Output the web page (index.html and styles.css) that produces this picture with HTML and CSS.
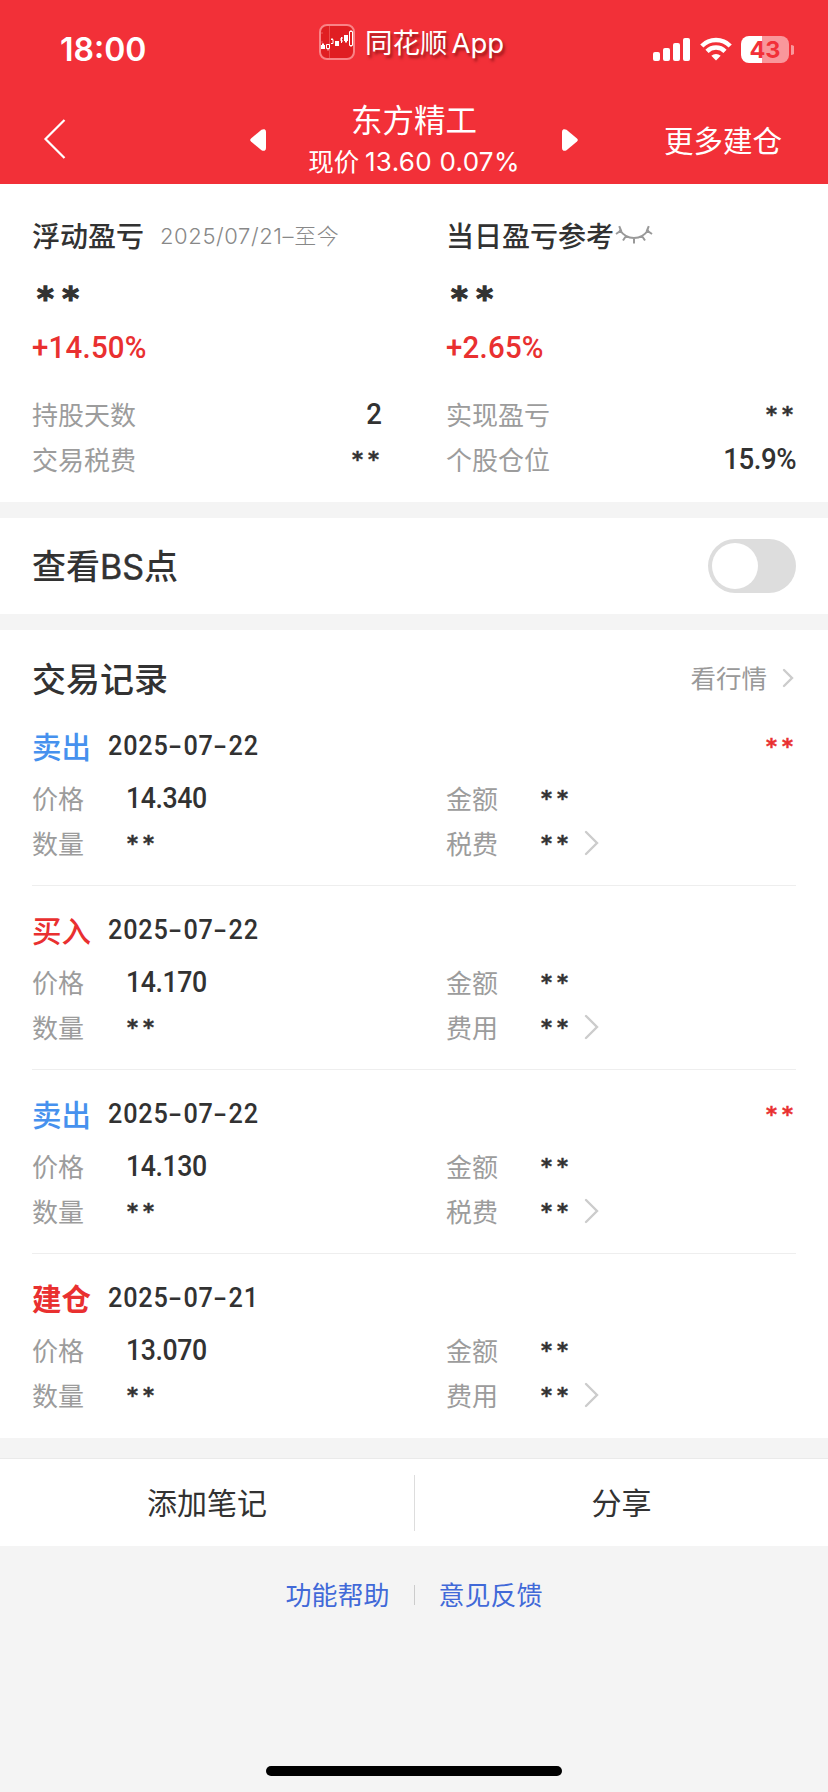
FILE: index.html
```html
<!DOCTYPE html>
<html lang="zh-CN">
<head>
<meta charset="utf-8">
<title>东方精工</title>
<link rel="stylesheet" href="styles.css">
</head>
<body>
<header class="header">
  <div class="status">
    <span class="clock">18:00</span>
    <div class="app">
      <svg class="app-icon" width="36" height="36" viewBox="0 0 36 36">
        <rect x="1" y="1" width="34" height="34" rx="7" fill="#e01e22" stroke="#f98386" stroke-width="2"/>
        <path d="M10.5 2v32" stroke="#ec4a4c"/>
        <path d="M2 9h2M2 18h2" stroke="#ef5a5c"/>
        <path d="M2 21h4v4H2zM3 19.500h2v2H3zM16 17h4v5h-4zM25 11h4v6h-4zM26 17h2v1.500h-2z" fill="#fff"/>
        <path d="M7.500 20.500h3v4h-3zM9 24.500v2M12 15.500h2v4h-2M13 14v1.500M24 14h-2v3h2M22.500 13v6M30.500 7.500h3v14h-3zM32 6v1.500M32 21v2" fill="none" stroke="#fff"/>
      </svg>
      <span class="app-name">同花顺<span class="app-latin">App</span></span>
    </div>
    <div class="indicators">
      <svg width="37" height="24" viewBox="0 0 37 24" fill="#fff">
        <rect x="0" y="14" width="7" height="9" rx="2"/><rect x="10" y="10" width="7" height="13" rx="2"/><rect x="20" y="5" width="7" height="18" rx="2"/><rect x="30" y="0" width="7" height="23" rx="2"/>
      </svg>
      <svg class="wifi" width="32" height="24" viewBox="0 0 32 24">
        <path d="M1.800 9a20 20 0 0 1 28.400 0M7 14.300a12.800 12.800 0 0 1 18 0" fill="none" stroke="#fff" stroke-width="4.500"/>
        <path d="M16 23.500l-4.700-4.800a7 7 0 0 1 9.400 0z" fill="#fff"/>
      </svg>
      <span class="battery">43</span>
      <svg class="nub" width="3" height="10" viewBox="0 0 3 10"><path d="M0 0a5 5 0 0 1 0 10z" fill="#f9979b"/></svg>
    </div>
  </div>
  <nav class="nav">
    <svg class="back" width="24" height="42" viewBox="0 0 24 42"><path d="M21.500 2L2.500 21l19 19" fill="none" stroke="#fff" stroke-width="2.200"/></svg>
    <svg class="prev" width="16" height="22" viewBox="0 0 16 22"><path d="M1 9.500L11.500.8Q13 0 14.500.3 16 .8 16 3v16q0 2.200-1.500 2.700-1.500.3-3-.5L1 12.500q-1.600-1.500 0-3z" fill="#fff"/></svg>
    <div class="stock">
      <div class="stock-name">东方精工</div>
      <div class="stock-price">现价 <span class="quote">13.60 0.07%</span></div>
    </div>
    <svg class="next" width="16" height="22" viewBox="0 0 16 22"><path d="M15 9.500L4.500.8Q3 0 1.500.3 0 .8 0 3v16q0 2.200 1.500 2.700 1.500.3 3-.5L15 12.500q1.600-1.500 0-3z" fill="#fff"/></svg>
    <span class="more">更多建仓</span>
  </nav>
</header>

<section class="summary">
  <div class="col">
    <div class="col-head">浮动盈亏<span class="since">2025/07/21–至今</span></div>
    <div class="stars-lg">**</div>
    <div class="pct">+14.50%</div>
    <div class="pair first"><span class="label">持股天数</span><span class="num">2</span></div>
    <div class="pair"><span class="label">交易税费</span><span class="stars end">**</span></div>
  </div>
  <div class="col">
    <div class="col-head">当日盈亏参考<svg class="eye" width="38" height="20" viewBox="0 0 38 20" fill="none" stroke="#999" stroke-width="2"><path d="M4.500 4.500Q10 13 19 13t14.500-8.500M1 9l5-3.500L4.200 1.200M37 9l-5-3.500 1.800-4.300M11 11l-3 4.500M19 13v5.500M27 11l3 4.500"/></svg></div>
    <div class="stars-lg">**</div>
    <div class="pct">+2.65%</div>
    <div class="pair first"><span class="label">实现盈亏</span><span class="stars end">**</span></div>
    <div class="pair"><span class="label">个股仓位</span><span class="num">15.9%</span></div>
  </div>
</section>

<section class="bs">
  <span class="title">查看<span class="latin">BS</span>点</span>
  <span class="toggle"><span class="knob"></span></span>
</section>

<section class="records">
  <div class="records-head">
    <span class="title">交易记录</span>
    <span class="market"><span class="market-text">看行情</span><svg width="12" height="20" viewBox="0 0 12 20"><path d="M2 2l8 8-8 8" fill="none" stroke="#ccc" stroke-width="2.400" stroke-linecap="round"/></svg></span>
  </div>
  <article class="record">
    <div class="record-head"><span class="side sell">卖出</span><span class="date">2025<i>-</i>07<i>-</i>22</span><span class="stars end gain">**</span></div>
    <div class="line"><span class="label">价格</span><span class="num">14.340</span><span class="label">金额</span><span class="stars">**</span></div>
    <div class="line"><span class="label">数量</span><span class="stars">**</span><span class="label">税费</span><span class="stars">**</span><svg class="go" width="16" height="26" viewBox="0 0 16 26"><path d="M2 2l11 11L2 24"/></svg></div>
  </article>
  <article class="record">
    <div class="record-head"><span class="side">买入</span><span class="date">2025<i>-</i>07<i>-</i>22</span></div>
    <div class="line"><span class="label">价格</span><span class="num">14.170</span><span class="label">金额</span><span class="stars">**</span></div>
    <div class="line"><span class="label">数量</span><span class="stars">**</span><span class="label">费用</span><span class="stars">**</span><svg class="go" width="16" height="26" viewBox="0 0 16 26"><path d="M2 2l11 11L2 24"/></svg></div>
  </article>
  <article class="record">
    <div class="record-head"><span class="side sell">卖出</span><span class="date">2025<i>-</i>07<i>-</i>22</span><span class="stars end gain">**</span></div>
    <div class="line"><span class="label">价格</span><span class="num">14.130</span><span class="label">金额</span><span class="stars">**</span></div>
    <div class="line"><span class="label">数量</span><span class="stars">**</span><span class="label">税费</span><span class="stars">**</span><svg class="go" width="16" height="26" viewBox="0 0 16 26"><path d="M2 2l11 11L2 24"/></svg></div>
  </article>
  <article class="record">
    <div class="record-head"><span class="side open">建仓</span><span class="date">2025<i>-</i>07<i>-</i>21</span></div>
    <div class="line"><span class="label">价格</span><span class="num">13.070</span><span class="label">金额</span><span class="stars">**</span></div>
    <div class="line"><span class="label">数量</span><span class="stars">**</span><span class="label">费用</span><span class="stars">**</span><svg class="go" width="16" height="26" viewBox="0 0 16 26"><path d="M2 2l11 11L2 24"/></svg></div>
  </article>
</section>

<div class="actions"><span>添加笔记</span><span class="split"></span><span>分享</span></div>
<footer class="links"><span>功能帮助</span><span class="bar"></span><span>意见反馈</span></footer>
<div class="home"></div>
</body>
</html>
```
FILE: styles.css
```css
* { box-sizing: border-box; }
body {
  margin: 0;
  width: 828px;
  height: 1792px;
  overflow: hidden;
  display: flex;
  flex-direction: column;
  background: #f4f4f4;
  color: #323232;
  font-family: "Noto Sans CJK SC", sans-serif;
  white-space: nowrap;
}
svg { display: block; flex: none; }

.header { height: 184px; background: #f23038; color: #fff; flex: none; }
.status { height: 98px; display: flex; align-items: flex-start; }
.clock { width: 259px; margin-left: 60px; padding-top: 30px; font: 600 32px/40px Inter, sans-serif; }
.app { display: flex; align-items: center; width: 334px; margin-top: 24px; height: 36px; }
.app-name { margin-left: 10px; font-size: 27.500px; line-height: 36px; text-shadow: 2px 3px 3px rgba(80, 0, 0, .55); }
.app-latin { font-family: Inter, sans-serif; margin-left: 4px; }
.indicators { display: flex; padding-top: 36px; }
.indicators svg:first-child { margin-top: 2px; }
.wifi { margin: 1px 9px 0 10px; }
.battery {
  width: 48px; height: 27px; border-radius: 8px;
  background: linear-gradient(90deg, #fff 21px, #f9979b 21px);
  color: #f23038; text-align: center; font: 700 23.500px/27px Inter, sans-serif;
}
.nub { margin: 9px 0 0 2px; }
.nav { display: flex; height: 86px; }
.back { margin: 20px 0 0 43px; }
.prev { margin: 31px 0 0 183px; }
.stock { width: 296px; text-align: center; }
.stock-name { font-size: 31.500px; line-height: 40px; }
.stock-price { font-size: 25.500px; line-height: 44px; }
.quote { font-family: Inter, sans-serif; font-size: 26px; letter-spacing: .3px; }
.next { margin-top: 31px; }
.more { margin: 20px 0 0 86px; font-size: 29.500px; line-height: 42px; }

.summary { height: 318px; background: #fff; display: flex; flex: none; }
.col { width: 414px; padding: 31px 32px 0; }
.col-head { display: flex; align-items: center; height: 40px; font-size: 28px; line-height: 40px; font-weight: 500; }
.since { margin-left: 16px; padding-top: 2px; font: 300 22px/40px Inter, "Noto Sans CJK SC", sans-serif; letter-spacing: .6px; color: #888; }
.eye { margin: 0 0 0 1px; }
.stars, .stars-lg { font-family: "DejaVu Sans", sans-serif; font-weight: 700; -webkit-text-stroke: .5px currentColor; }
.stars { font-size: 21px; line-height: 30px; letter-spacing: 5px; padding-top: 2px; padding-left: 1px; }
.stars.end { margin-left: auto; margin-right: -2px; }
.stars-lg { font-size: 32px; line-height: 48px; letter-spacing: 8.500px; margin-top: 19px; padding-left: 5px; height: 43px; -webkit-text-stroke-width: 1.300px; }
.pct { height: 60px; font: 500 32px/60px Roboto, sans-serif; color: #e93030; letter-spacing: .25px; transform: scaleX(.92); transform-origin: left; }
.pair { display: flex; align-items: center; justify-content: space-between; height: 45px; }
.pair.first { margin-top: 14px; }
.label { font-size: 26px; line-height: 38px; color: #9c9c9c; }
.num { font: 500 30px/38px Roboto, sans-serif; letter-spacing: -.5px; transform: scaleX(.89); transform-origin: left; }
.pair .num { transform: scaleX(.92); transform-origin: right; }

.title { font-size: 34px; line-height: 48px; font-weight: 500; padding-bottom: 1px; }
.latin { font-family: Inter, sans-serif; font-weight: 400; -webkit-text-stroke: .5px currentColor; }
.bs { height: 96px; margin-top: 16px; padding: 0 32px; background: #fff; display: flex; align-items: center; justify-content: space-between; flex: none; }
.toggle { width: 88px; height: 54px; border-radius: 27px; padding: 4px; background: #ddd; }
.knob { display: block; width: 46px; height: 46px; border-radius: 50%; background: #fff; }

.records { height: 808px; margin-top: 16px; padding: 0 32px; background: #fff; flex: none; }
.records-head { height: 72px; padding-top: 24px; display: flex; justify-content: space-between; align-items: center; }
.market { display: flex; align-items: center; gap: 15px; padding-right: 2px; font-size: 25.500px; color: #999; }
.market-text { padding-bottom: 4px; }
.record { height: 184px; padding-top: 15px; border-bottom: 1px solid #eee; }
.record:last-child { border: 0; }
.record-head { display: flex; align-items: center; height: 58px; }
.side { width: 76px; font-size: 29.500px; line-height: 44px; padding-bottom: 2px; font-weight: 500; color: #e93030; }
.sell { color: #4691ee; }
.open { font-weight: 700; }
.date { font: 500 28px/40px Roboto, sans-serif; letter-spacing: .9px; transform: scaleX(.9); transform-origin: left; }
.date i { font-style: normal; display: inline-block; width: 16.500px; text-align: center; transform: scaleX(1.600); }
.gain { color: #e93030; }
.line { display: grid; grid-template-columns: 94px 320px 94px 44px 16px; align-items: center; height: 45.500px; }
.go path { fill: none; stroke: #ccc; stroke-width: 2.400; stroke-linecap: round; }

.actions { height: 88px; margin-top: 20px; border-top: 1px solid #eaeaea; background: #fff; display: grid; grid-template-columns: 414px 1px 413px; align-items: center; text-align: center; font-size: 30px; flex: none; }
.actions span:not(.split) { padding-bottom: 4px; }
.split { height: 56px; background: #ddd; }
.links { display: flex; justify-content: center; align-items: center; gap: 24px; height: 94px; font-size: 26px; color: #4169d8; }
.bar { width: 1px; height: 20px; margin-top: 4px; background: #ccc; }
.home { width: 296px; height: 10px; border-radius: 5px; background: #000; margin: 126px auto 0; }
```
